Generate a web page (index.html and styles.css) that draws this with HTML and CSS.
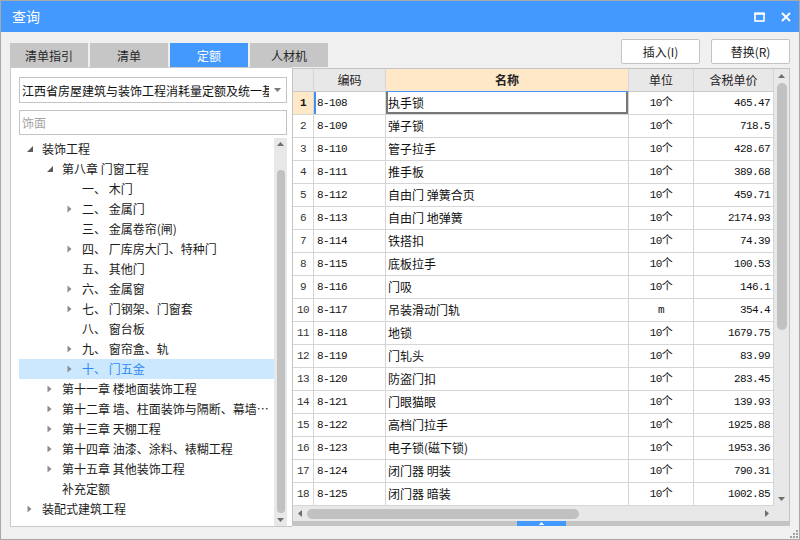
FILE: index.html
```html
<!DOCTYPE html>
<html lang="zh-CN">
<head>
<meta charset="utf-8">
<title>查询</title>
<link rel="stylesheet" href="styles.css">
</head>
<body>
<div class="window">
  <div class="titlebar">
    <span class="title">查询</span>
    <div class="winctl">
      <svg width="11" height="10" viewBox="0 0 11 10"><rect x="1" y="1.5" width="9" height="7.5" fill="none" stroke="#fff" stroke-width="1.6"/><rect x="0.2" y="0.5" width="10.6" height="2.2" fill="#fff"/></svg>
      <svg width="10" height="10" viewBox="0 0 10 10"><path d="M1 1L9 9M9 1L1 9" stroke="#fff" stroke-width="2"/></svg>
    </div>
  </div>
  <div class="body">
    <div class="toprow">
      <div class="tabs">
        <div class="tab">清单指引</div>
        <div class="tab">清单</div>
        <div class="tab active">定额</div>
        <div class="tab">人材机</div>
      </div>
      <div class="actions">
        <button class="btn">插入(I)</button>
        <button class="btn">替换(R)</button>
      </div>
    </div>
    <div class="main">
      <div class="leftpanel">
        <div class="combo">
          <span class="combo-text">江西省房屋建筑与装饰工程消耗量定额及统一基价表(2017)</span>
          <svg class="caret" width="7" height="4" viewBox="0 0 7 4"><path d="M0 0H7L3.5 4Z" fill="#7a7a7a"/></svg>
        </div>
        <input class="search" placeholder="饰面">
        <div class="treebox">
          <div class="tree">
            <div class="node l1"><span class="tw"><svg width="6" height="6" viewBox="0 0 6 6"><path d="M6 0V6H0Z" fill="#5c5c5c"/></svg></span><span class="lbl">装饰工程</span></div>
            <div class="node l2"><span class="tw"><svg width="6" height="6" viewBox="0 0 6 6"><path d="M6 0V6H0Z" fill="#5c5c5c"/></svg></span><span class="lbl">第八章 门窗工程</span></div>
            <div class="node l3"><span class="tw"></span><span class="lbl">一、 木门</span></div>
            <div class="node l3"><span class="tw"><svg width="5" height="8" viewBox="0 0 5 8"><path d="M0.5 0.5L4.5 4L0.5 7.5Z" fill="#8c8c8c"/></svg></span><span class="lbl">二、 金属门</span></div>
            <div class="node l3"><span class="tw"></span><span class="lbl">三、 金属卷帘(闸)</span></div>
            <div class="node l3"><span class="tw"><svg width="5" height="8" viewBox="0 0 5 8"><path d="M0.5 0.5L4.5 4L0.5 7.5Z" fill="#8c8c8c"/></svg></span><span class="lbl">四、 厂库房大门、特种门</span></div>
            <div class="node l3"><span class="tw"></span><span class="lbl">五、 其他门</span></div>
            <div class="node l3"><span class="tw"><svg width="5" height="8" viewBox="0 0 5 8"><path d="M0.5 0.5L4.5 4L0.5 7.5Z" fill="#8c8c8c"/></svg></span><span class="lbl">六、 金属窗</span></div>
            <div class="node l3"><span class="tw"><svg width="5" height="8" viewBox="0 0 5 8"><path d="M0.5 0.5L4.5 4L0.5 7.5Z" fill="#8c8c8c"/></svg></span><span class="lbl">七、 门钢架、门窗套</span></div>
            <div class="node l3"><span class="tw"></span><span class="lbl">八、 窗台板</span></div>
            <div class="node l3"><span class="tw"><svg width="5" height="8" viewBox="0 0 5 8"><path d="M0.5 0.5L4.5 4L0.5 7.5Z" fill="#8c8c8c"/></svg></span><span class="lbl">九、 窗帘盒、轨</span></div>
            <div class="node l3 cur"><span class="tw"><svg width="5" height="8" viewBox="0 0 5 8"><path d="M0.5 0.5L4.5 4L0.5 7.5Z" fill="#8c8c8c"/></svg></span><span class="lbl">十、 门五金</span></div>
            <div class="node l2"><span class="tw"><svg width="5" height="8" viewBox="0 0 5 8"><path d="M0.5 0.5L4.5 4L0.5 7.5Z" fill="#8c8c8c"/></svg></span><span class="lbl">第十一章 楼地面装饰工程</span></div>
            <div class="node l2"><span class="tw"><svg width="5" height="8" viewBox="0 0 5 8"><path d="M0.5 0.5L4.5 4L0.5 7.5Z" fill="#8c8c8c"/></svg></span><span class="lbl">第十二章 墙、柱面装饰与隔断、幕墙工程</span></div>
            <div class="node l2"><span class="tw"><svg width="5" height="8" viewBox="0 0 5 8"><path d="M0.5 0.5L4.5 4L0.5 7.5Z" fill="#8c8c8c"/></svg></span><span class="lbl">第十三章 天棚工程</span></div>
            <div class="node l2"><span class="tw"><svg width="5" height="8" viewBox="0 0 5 8"><path d="M0.5 0.5L4.5 4L0.5 7.5Z" fill="#8c8c8c"/></svg></span><span class="lbl">第十四章 油漆、涂料、裱糊工程</span></div>
            <div class="node l2"><span class="tw"><svg width="5" height="8" viewBox="0 0 5 8"><path d="M0.5 0.5L4.5 4L0.5 7.5Z" fill="#8c8c8c"/></svg></span><span class="lbl">第十五章 其他装饰工程</span></div>
            <div class="node l2"><span class="tw"></span><span class="lbl">补充定额</span></div>
            <div class="node l1"><span class="tw"><svg width="5" height="8" viewBox="0 0 5 8"><path d="M0.5 0.5L4.5 4L0.5 7.5Z" fill="#8c8c8c"/></svg></span><span class="lbl">装配式建筑工程</span></div>
          </div>
          <div class="vs vs-tree">
            <span class="ab"><svg width="7" height="4" viewBox="0 0 7 4"><path d="M0 4H7L3.5 0Z" fill="#6e6e6e"/></svg></span>
            <div class="thumb"></div>
            <span class="ab end"><svg width="7" height="4" viewBox="0 0 7 4"><path d="M0 0H7L3.5 4Z" fill="#6e6e6e"/></svg></span>
          </div>
        </div>
      </div>
      <div class="rightpanel">
        <div class="gridwrap">
          <div class="grid">
            <div class="row head"><div class="c num"></div><div class="c code">编码</div><div class="c name">名称</div><div class="c unit">单位</div><div class="c price">含税单价</div></div>
            <div class="row r1"><div class="c num">1</div><div class="c code">8-108</div><div class="c name">执手锁</div><div class="c unit">10个</div><div class="c price">465.47</div></div>
            <div class="row"><div class="c num">2</div><div class="c code">8-109</div><div class="c name">弹子锁</div><div class="c unit">10个</div><div class="c price">718.5</div></div>
            <div class="row"><div class="c num">3</div><div class="c code">8-110</div><div class="c name">管子拉手</div><div class="c unit">10个</div><div class="c price">428.67</div></div>
            <div class="row"><div class="c num">4</div><div class="c code">8-111</div><div class="c name">推手板</div><div class="c unit">10个</div><div class="c price">389.68</div></div>
            <div class="row"><div class="c num">5</div><div class="c code">8-112</div><div class="c name">自由门 弹簧合页</div><div class="c unit">10个</div><div class="c price">459.71</div></div>
            <div class="row"><div class="c num">6</div><div class="c code">8-113</div><div class="c name">自由门 地弹簧</div><div class="c unit">10个</div><div class="c price">2174.93</div></div>
            <div class="row"><div class="c num">7</div><div class="c code">8-114</div><div class="c name">铁搭扣</div><div class="c unit">10个</div><div class="c price">74.39</div></div>
            <div class="row"><div class="c num">8</div><div class="c code">8-115</div><div class="c name">底板拉手</div><div class="c unit">10个</div><div class="c price">100.53</div></div>
            <div class="row"><div class="c num">9</div><div class="c code">8-116</div><div class="c name">门吸</div><div class="c unit">10个</div><div class="c price">146.1</div></div>
            <div class="row"><div class="c num">10</div><div class="c code">8-117</div><div class="c name">吊装滑动门轨</div><div class="c unit">m</div><div class="c price">354.4</div></div>
            <div class="row"><div class="c num">11</div><div class="c code">8-118</div><div class="c name">地锁</div><div class="c unit">10个</div><div class="c price">1679.75</div></div>
            <div class="row"><div class="c num">12</div><div class="c code">8-119</div><div class="c name">门轧头</div><div class="c unit">10个</div><div class="c price">83.99</div></div>
            <div class="row"><div class="c num">13</div><div class="c code">8-120</div><div class="c name">防盗门扣</div><div class="c unit">10个</div><div class="c price">283.45</div></div>
            <div class="row"><div class="c num">14</div><div class="c code">8-121</div><div class="c name">门眼猫眼</div><div class="c unit">10个</div><div class="c price">139.93</div></div>
            <div class="row"><div class="c num">15</div><div class="c code">8-122</div><div class="c name">高档门拉手</div><div class="c unit">10个</div><div class="c price">1925.88</div></div>
            <div class="row"><div class="c num">16</div><div class="c code">8-123</div><div class="c name">电子锁(磁下锁)</div><div class="c unit">10个</div><div class="c price">1953.36</div></div>
            <div class="row"><div class="c num">17</div><div class="c code">8-124</div><div class="c name">闭门器 明装</div><div class="c unit">10个</div><div class="c price">790.31</div></div>
            <div class="row"><div class="c num">18</div><div class="c code">8-125</div><div class="c name">闭门器 暗装</div><div class="c unit">10个</div><div class="c price">1002.85</div></div>
          </div>
          <div class="vs vs-grid">
            <span class="ab"><svg width="7" height="4" viewBox="0 0 7 4"><path d="M0 4H7L3.5 0Z" fill="#6e6e6e"/></svg></span>
            <div class="thumb"></div>
            <span class="ab end"><svg width="7" height="4" viewBox="0 0 7 4"><path d="M0 0H7L3.5 4Z" fill="#6e6e6e"/></svg></span>
          </div>
        </div>
        <div class="hsrow">
          <div class="hs">
            <span class="ab"><svg width="4" height="7" viewBox="0 0 4 7"><path d="M4 0V7L0 3.5Z" fill="#6e6e6e"/></svg></span>
            <div class="thumb"></div>
            <span class="ab end"><svg width="4" height="7" viewBox="0 0 4 7"><path d="M0 0V7L4 3.5Z" fill="#6e6e6e"/></svg></span>
          </div>
          <div class="corner"></div>
        </div>
        <div class="splitter"><span class="handle"><svg width="7" height="4" viewBox="0 0 7 4"><path d="M0 4H7L3.5 0Z" fill="#fff"/></svg></span></div>
      </div>
    </div>
    <div class="bottom">
      <svg class="grip" width="8" height="8" viewBox="0 0 8 8"><g fill="#a2a2a2"><rect x="6" y="0" width="2" height="2"/><rect x="3" y="3" width="2" height="2"/><rect x="6" y="3" width="2" height="2"/><rect x="0" y="6" width="2" height="2"/><rect x="3" y="6" width="2" height="2"/><rect x="6" y="6" width="2" height="2"/></g></svg>
    </div>
  </div>
</div>
</body>
</html>
```

FILE: styles.css
```css
* { box-sizing: border-box; }
html, body { margin: 0; padding: 0; }
body {
  width: 800px;
  height: 540px;
  overflow: hidden;
  background: #f0f0f0;
  font-family: "Noto Sans CJK SC", "Microsoft YaHei", sans-serif;
  font-size: 12px;
  color: #1b1b1b;
}
.window {
  width: 800px;
  height: 540px;
  border: 1px solid #a8a8a8;
  display: flex;
  flex-direction: column;
  background: #f0f0f0;
}
.titlebar {
  height: 31px;
  flex: none;
  background: #4499ff;
  color: #fff;
  display: flex;
  align-items: center;
  justify-content: space-between;
  padding: 0 8px 0 11px;
}
.title { font-size: 14px; line-height: 31px; }
.winctl { display: flex; align-items: center; gap: 16px; }

.body {
  flex: 1;
  min-height: 0;
  display: flex;
  flex-direction: column;
  padding: 0 8px 0 9px;
}
.toprow {
  height: 35px;
  flex: none;
  display: flex;
  justify-content: space-between;
}
.tabs { display: flex; gap: 2px; align-self: flex-end; }
.tab {
  width: 78px;
  height: 24px;
  background: #c6c6c6;
  color: #262626;
  display: flex;
  align-items: center;
  justify-content: center;
  font-size: 12px;
}
.tab.active { background: #4499ff; color: #fff; }
.actions { display: flex; gap: 11px; padding-top: 7px; margin-right: 1px; }
.btn {
  width: 79px;
  height: 25px;
  background: #fff;
  border: 1px solid #c3c3c3;
  border-radius: 2px;
  font-family: inherit;
  font-size: 12px;
  color: #222;
  padding: 0;
}

.main { height: 460px; flex: none; display: flex; }
.leftpanel {
  width: 282px;
  height: 460px;
  background: #fff;
  border: 1px solid #cacaca;
  border-right: none;
  display: flex;
  flex-direction: column;
  padding: 9px 5px 0 8px;
}
.combo {
  height: 26px;
  flex: none;
  border: 1px solid #c4c4c4;
  display: flex;
  align-items: center;
  padding-left: 2px;
}
.combo-text { width: 247px; overflow: hidden; white-space: nowrap; color: #111; }
.caret { margin-left: 5px; }
.search {
  width: 100%;
  height: 25px;
  flex: none;
  margin: 7px 0 0;
  border: 1px solid #c4c4c4;
  padding: 0 0 0 2px;
  font-family: inherit;
  font-size: 12px;
  outline: none;
}
.search::placeholder { color: #a3a3a3; }
.treebox { flex: 1; min-height: 0; margin-top: 3px; display: flex; }
.tree { flex: 1; min-width: 0; padding-top: 1px; overflow: hidden; }
.node {
  height: 20px;
  line-height: 20px;
  display: flex;
  align-items: center;
  white-space: nowrap;
  color: #1b1b1b;
}
.l2 { padding-left: 20px; }
.l3 { padding-left: 40px; }
.tw { width: 23px; flex: none; display: flex; align-items: center; padding-left: 8px; }
.lbl { overflow: hidden; text-overflow: ellipsis; min-width: 0; }
.node.cur { background: #cce8ff; color: #2f88f0; }

.vs { background: #e8e8e8; display: flex; flex-direction: column; align-items: center; flex: none; }
.vs .ab, .hs .ab { display: flex; align-items: center; justify-content: center; flex: none; }
.thumb { background: #c1c1c1; flex: none; }
.vs-tree { width: 13px; }
.vs-tree .ab { height: 12px; width: 13px; }
.vs-tree .thumb { width: 8px; height: 343px; margin-top: 20px; border-radius: 4px; }
.vs .end { margin-top: auto; }

.rightpanel {
  width: 498px;
  height: 458px;
  margin-top: 1px;
  background: #fff;
  border: 1px solid #c4c4c4;
  border-bottom: none;
  display: flex;
  flex-direction: column;
}
.gridwrap { height: 437px; display: flex; flex: none; }
.grid { width: 481px; flex: none; }
.row {
  display: grid;
  grid-template-columns: 21px 72px 243px 65px 80px;
  height: 23px;
}
.c {
  border-right: 1px solid #d6d6d6;
  border-bottom: 1px solid #d6d6d6;
  line-height: 22px;
  white-space: nowrap;
  overflow: hidden;
  color: #111;
}
.num, .code, .price, .unit {
  font-family: "Liberation Mono", "Noto Sans CJK SC", monospace;
  font-size: 11px;
  letter-spacing: -0.6px;
}
.num { text-align: center; color: #333; }
.code { padding-left: 3px; }
.name { padding-left: 2px; }
.unit { text-align: center; }
.price { text-align: right; padding-right: 3px; }
.head .c {
  background: #e8e8e8;
  text-align: center;
  color: #222;
  border-bottom-color: #c9c9c9;
  font-family: "Noto Sans CJK SC", "Microsoft YaHei", sans-serif;
  font-size: 12px;
  letter-spacing: 0;
  padding: 0;
}
.head .c.name { background: #ffe8c8; font-weight: bold; border-bottom: 1px solid #4499ff; }
.r1 .num { background: #ffe8c8; font-weight: bold; color: #111; }
.r1 .code { box-shadow: inset 2px 0 0 #3d8ef5; }
.r1 .name { box-shadow: inset 2px 0 0 #777, inset -2px 0 0 #777, inset 0 -2px 0 #777; }

.vs-grid { width: 15px; }
.vs-grid .ab { height: 14px; width: 15px; }
.vs-grid .thumb { width: 10px; height: 247px; border-radius: 5px; }

.hsrow { height: 15px; display: flex; flex: none; }
.hs { width: 481px; background: #e8e8e8; display: flex; align-items: center; flex: none; }
.hs .ab { width: 14px; height: 15px; }
.hs .thumb { width: 272px; height: 10px; border-radius: 5px; }
.hs .end { margin-left: auto; }
.corner { flex: 1; background: #e8e8e8; }
.splitter {
  height: 5px;
  flex: none;
  background: #c4c4c4;
  display: flex;
  justify-content: center;
}
.handle {
  width: 49px;
  height: 5px;
  background: #4499ff;
  display: flex;
  align-items: center;
  justify-content: center;
}
.handle svg { width: 7px; height: 3px; }
.bottom {
  flex: 1;
  display: flex;
  justify-content: flex-end;
  align-items: flex-end;
  padding: 0 0 1px;
  margin-right: -7px;
}
```
